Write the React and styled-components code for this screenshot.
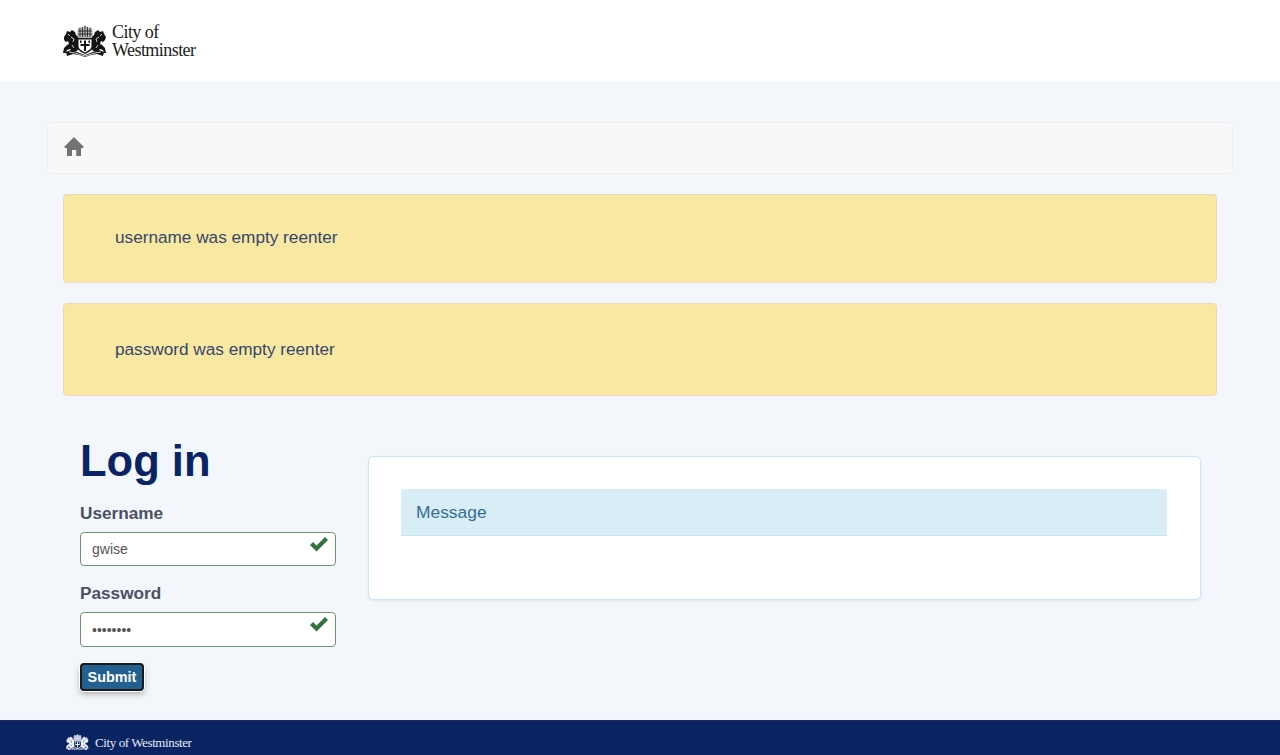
import React from 'react'
import styled, { createGlobalStyle } from 'styled-components'

const GlobalStyle = createGlobalStyle`
  * { box-sizing: border-box; }
  html, body { margin: 0; padding: 0; }
  body {
    background: #f3f6fb;
    font-family: "Liberation Sans", Arial, sans-serif;
    color: #495057;
    height: 755px;
    overflow: hidden;
  }
`

const Page = styled.div`
  display: flex;
  flex-direction: column;
  height: 755px;
`

const Header = styled.header`
  height: 81px;
  background: #fff;
  padding: 23px 0 0 63px;
  flex-shrink: 0;
`

const Brand = styled.div`
  display: flex;
  align-items: center;
  gap: ${p => p.$gap}px;
`

const LogoText = styled.div`
  font-family: "Liberation Serif", "Times New Roman", serif;
  font-size: 18px;
  line-height: 18px;
  letter-spacing: -0.55px;
  color: #1c1c1c;
`

const Main = styled.main`
  flex: 1;
  padding: 41px 47px 0;
`

const Breadcrumb = styled.nav`
  height: 52px;
  background: #f8f8f8;
  border: 1px solid #eeeef0;
  border-radius: 5px;
  padding: 0 16px 2px;
  display: flex;
  align-items: center;
`

const Alert = styled.div`
  height: ${p => p.$height}px;
  margin: 20px 16px 0;
  background: #f9e8a2;
  border: 1px solid #efd6c4;
  border-radius: 4px;
  padding: 0 0 ${p => p.$bottom}px 51px;
  display: flex;
  align-items: center;
  font-size: 17.2px;
  color: #34466c;
`

const Content = styled.div`
  display: flex;
  padding: 0 32px 0 33px;
  gap: 32px;
  margin-top: 36px;
`

const LoginColumn = styled.div`
  width: 256px;
  flex-shrink: 0;
`

const Title = styled.h1`
  margin: 0 0 13px;
  font-size: 43.5px;
  line-height: 58px;
  font-weight: 700;
  color: #0a2463;
`

const Field = styled.div`
  margin-top: ${p => p.$top}px;
`

const Label = styled.label`
  display: block;
  font-size: 17.2px;
  line-height: 20px;
  font-weight: 700;
  color: #4b5063;
  margin-bottom: 9px;
`

const InputBox = styled.div`
  position: relative;
  height: ${p => p.$height}px;
`

const Input = styled.input`
  width: 100%;
  height: 100%;
  border: 1px solid #6b9a70;
  border-radius: 4px;
  background: #fff;
  padding: 0 11px;
  font-family: "Liberation Sans", Arial, sans-serif;
  font-size: 14px;
  color: #555;
  outline: none;
`

const Check = styled.svg`
  position: absolute;
  top: 3px;
  right: 8px;
  width: 18px;
  height: 18px;
  fill: #35703f;
`

const SubmitButton = styled.button`
  display: block;
  width: 64px;
  height: 28px;
  margin-top: 16px;
  padding: 0;
  background: #24608f;
  border: 2px solid #1a1a1a;
  border-radius: 4px;
  box-shadow: 0 0 0 1px #fff, 0 3px 6px rgba(0, 0, 0, 0.3);
  color: #fff;
  font-family: "Liberation Sans", Arial, sans-serif;
  font-size: 14.4px;
  font-weight: 700;
`

const Panel = styled.section`
  flex: 1;
  height: 144px;
  margin-top: 24px;
  background: #fff;
  border: 1px solid #c5e8f3;
  border-radius: 5px;
  box-shadow: 0 1px 2px rgba(0, 40, 80, 0.08);
  padding: 32px 33px 32px 32px;
`

const PanelHeading = styled.div`
  height: 47px;
  background: #d9edf7;
  border-bottom: 1px solid #bce8f1;
  border-radius: 3px 3px 0 0;
  padding: 0 15px;
  display: flex;
  align-items: center;
  font-size: 17.4px;
  color: #31708f;
`

const Footer = styled.footer`
  height: 35px;
  background: #0a2463;
  border-top: 1px solid #1b2a55;
  padding: 12px 0 0 66px;
  flex-shrink: 0;
`

const FooterText = styled.span`
  font-family: "Liberation Serif", "Times New Roman", serif;
  font-size: 13px;
  line-height: 16px;
  letter-spacing: -0.4px;
  color: #e6e9f2;
  padding-top: 2px;
`

// the arms, simplified: two lions holding a shield, helm on top, scroll below
const Crest = ({ width, color, hole, mid }) => (
  <svg width={width} viewBox="0 0 44 32" style={{ display: 'block' }} aria-hidden="true">
    {/* helm and mantling */}
    <path fill={mid} d="M15 3l2-1 2 1 3-3 3 3 2-1 2 1 1 8-2 3H16l-2-3z" />
    <path stroke={color} strokeWidth="0.8" d="M17 3v9M19.5 2v10M22 1v11M24.5 2v10M27 3v9M15 6h14M15 9h14" />
    {/* lions */}
    <path fill={color} d="M1 12l2-3 1-3 3 1 2-2 3 2 1 3 2 2 1 3-1 4 1 4-2 3-4 1-3-3-3 1-1 3H0l1-5 3-3 2-1-1-3-2 1-2-2z" />
    <path fill={color} d="M43 12l-2-3-1-3-3 1-2-2-3 2-1 3-2 2-1 3 1 4-1 4 2 3 4 1 3-3 3 1 1 3h2l-1-5-3-3-2-1 1-3 2 1 2-2z" />
    {/* shield */}
    <path fill={color} d="M14 13h16v8c0 4-4 6-8 8-4-2-8-4-8-8z" />
    <path fill={hole} d="M15.5 14.5h13V21c0 3-3 4.5-6.5 6.500-3.5-2-6.5-3.5-6.5-6.5z" />
    <path fill={color} d="M21 15.5h2V19h3.5v2H23v5h-2v-5h-3.5v-2H21zM17 15.5h1.5V18H17zM25.5 15.5H27V18h-1.5z" />
    {/* scroll and lion cut lines */}
    <path fill={color} d="M3 27l5-2 6 2 8 3 8-3 6-2 5 2-1 4-6-2-6 1-6 2-6-2-6-1-6 2z" />
    <path stroke={hole} strokeWidth="0.8" fill="none" d="M5 9l2 2M8 12l3 2-1 3M39 9l-2 2M36 12l-3 2 1 3M6 27l6 1 10 3 10-3 6-1M9 20l2 3M35 20l-2 3" />
  </svg>
)

const HomeIcon = () => (
  <svg width="20" height="20" viewBox="0 0 20 20" aria-hidden="true">
    <path fill="#737373" d="M10 0l10 10-1.8 1.200H17V19h-4.800v-6H8v6H3v-7.800H1.800L0 10z" />
  </svg>
)

const CheckIcon = () => (
  <Check viewBox="0 0 18 18" aria-hidden="true">
    <path d="M6.5 16.5L0 10l3-3 3.5 3.5L15 2l3 3z" />
  </Check>
)

export default function App() {
  return (
    <Page>
      <GlobalStyle />
      <Header>
        <Brand $gap={5}>
          <Crest width={44} color="#141414" hole="#fff" mid="#bbb" />
          <LogoText>City of<br />Westminster</LogoText>
        </Brand>
      </Header>
      <Main>
        <Breadcrumb>
          <HomeIcon />
        </Breadcrumb>
        <Alert $height={89} $bottom={2}>username was empty reenter</Alert>
        <Alert $height={93} $bottom={0}>password was empty reenter</Alert>
        <Content>
          <LoginColumn>
            <Title>Log in</Title>
            <Field $top={0}>
              <Label htmlFor="username">Username</Label>
              <InputBox $height={34}>
                <Input id="username" type="text" defaultValue="gwise" />
                <CheckIcon />
              </InputBox>
            </Field>
            <Field $top={17}>
              <Label htmlFor="password">Password</Label>
              <InputBox $height={35}>
                <Input id="password" type="password" defaultValue="password" />
                <CheckIcon />
              </InputBox>
            </Field>
            <SubmitButton type="button">Submit</SubmitButton>
          </LoginColumn>
          <Panel>
            <PanelHeading>Message</PanelHeading>
          </Panel>
        </Content>
      </Main>
      <Footer>
        <Brand $gap={6}>
          <Crest width={23} color="#eef0f6" hole="#0a2463" mid="#aab2cc" />
          <FooterText>City of Westminster</FooterText>
        </Brand>
      </Footer>
    </Page>
  )
}
